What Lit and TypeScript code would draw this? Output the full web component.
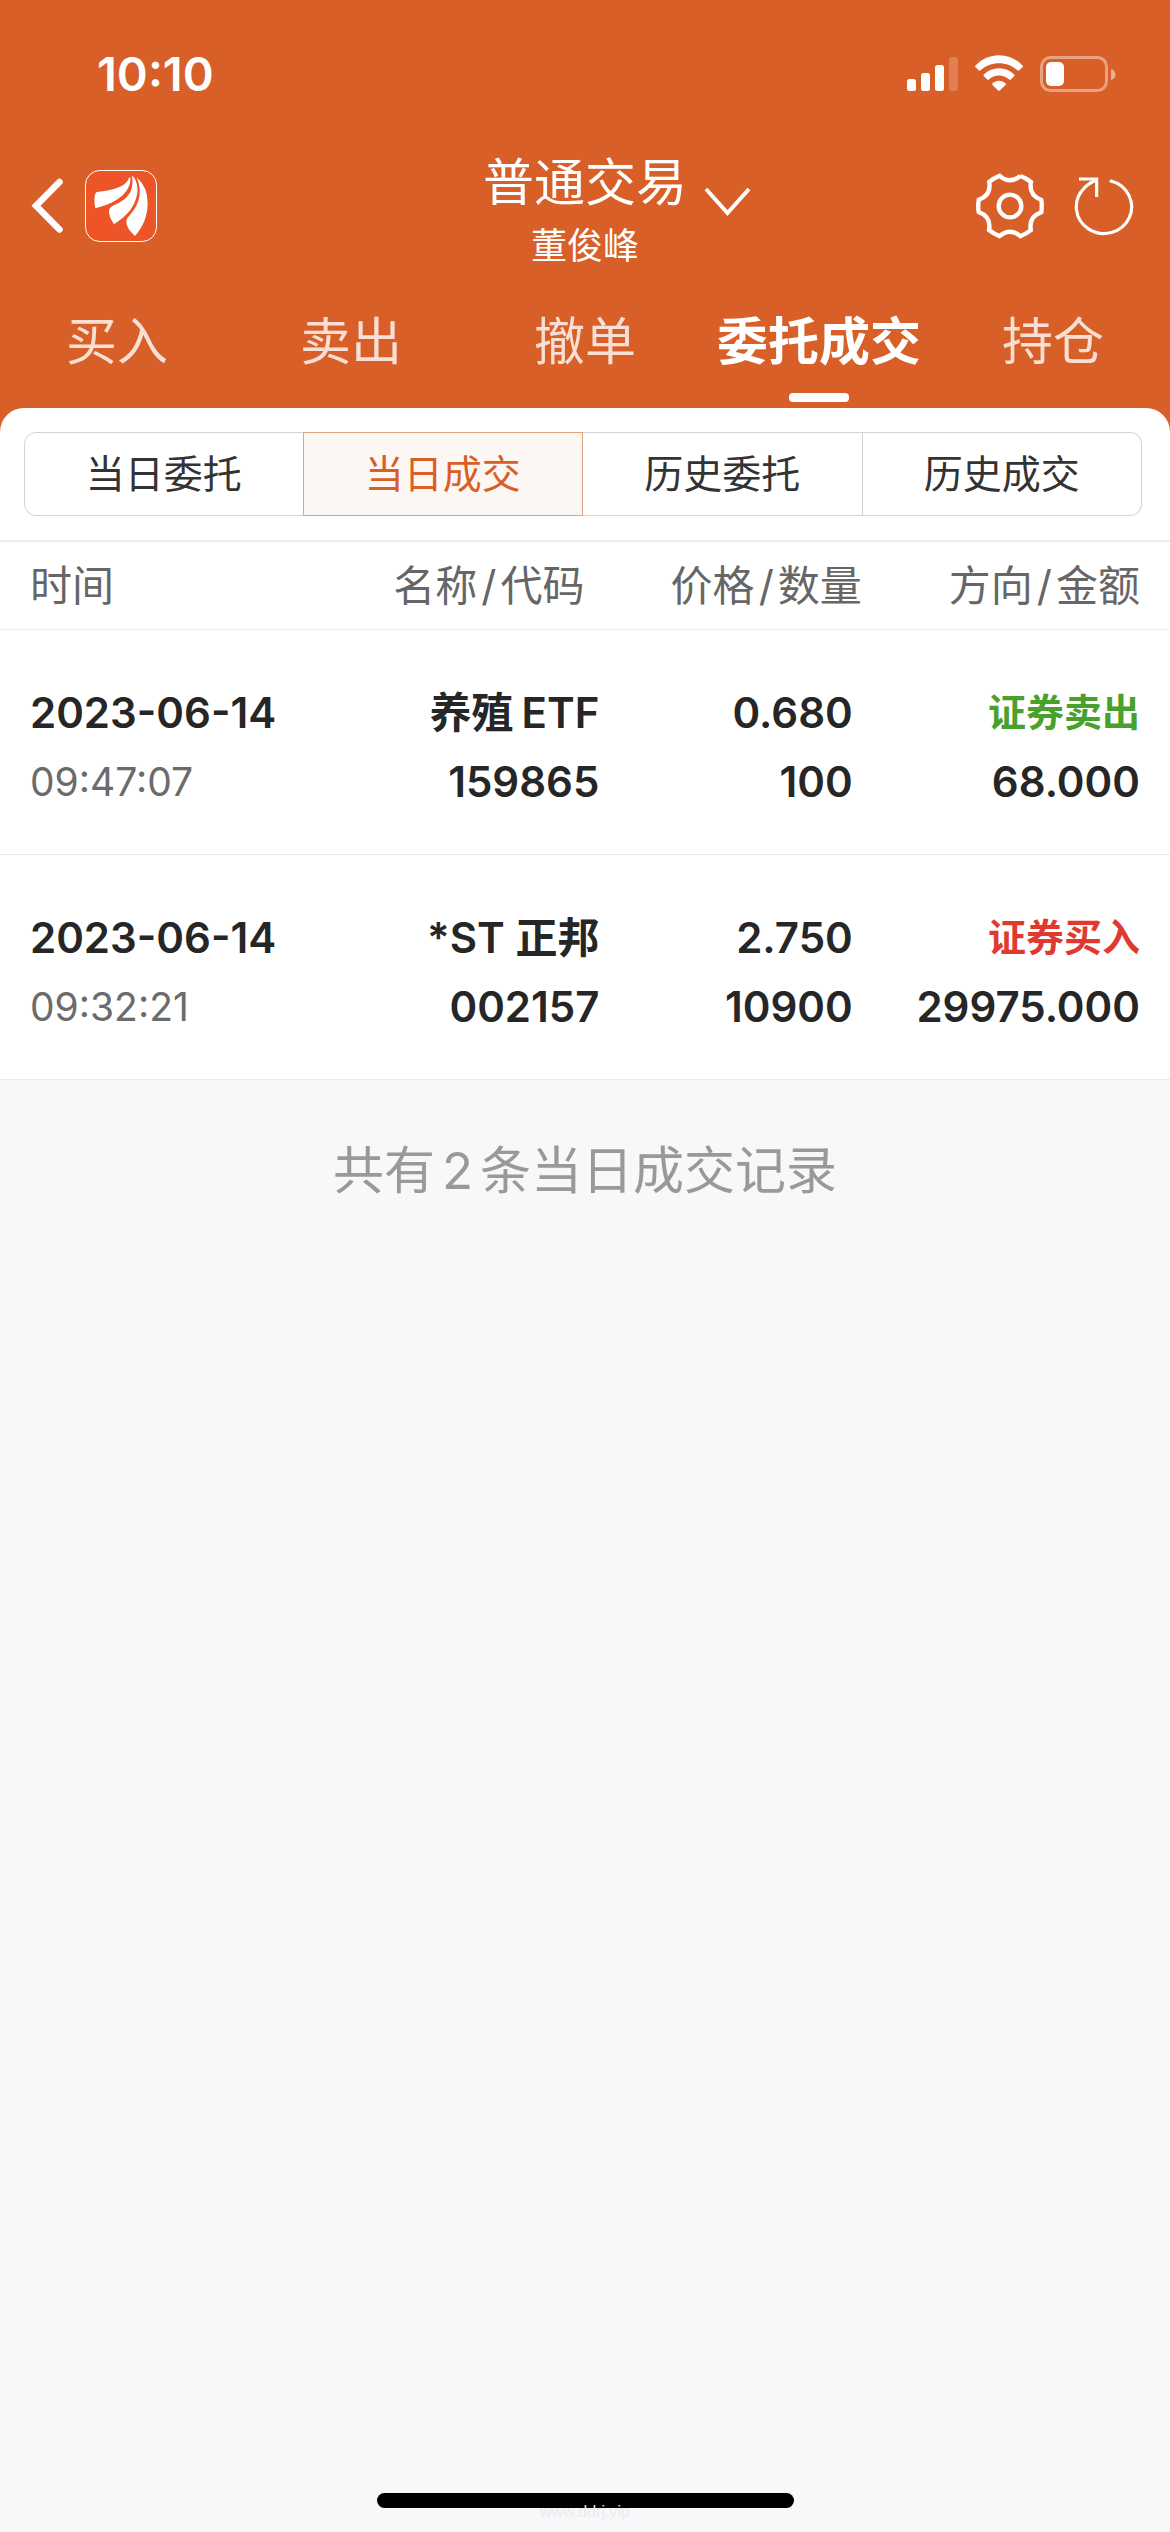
import { LitElement, html, css, svg } from "lit";
import { customElement, state } from "lit/decorators.js";
import { classMap } from "lit/directives/class-map.js";

interface Deal {
  date: string;
  time: string;
  name: unknown;
  code: string;
  price: string;
  quantity: string;
  side: "sell" | "buy";
  amount: string;
}

const DEALS: Deal[] = [
  { date: "2023-06-14", time: "09:47:07", name: html`养殖<span class="latin">ETF</span>`, code: "159865", price: "0.680", quantity: "100", side: "sell", amount: "68.000" },
  { date: "2023-06-14", time: "09:32:21", name: "*ST 正邦", code: "002157", price: "2.750", quantity: "10900", side: "buy", amount: "29975.000" },
];

const COLUMNS = [["时间"], ["名称", "代码"], ["价格", "数量"], ["方向", "金额"]];
const TABS = ["买入", "卖出", "撤单", "委托成交", "持仓"];
const SEGMENTS = ["当日委托", "当日成交", "历史委托", "历史成交"];
const SIDE_LABEL = { sell: "证券卖出", buy: "证券买入" };

/** Outline of a six-toothed cog: one tooth and one notch, turned six times. */
function cogPath(): string {
  const turn = (x: number, y: number, k: number) => {
    const a = (k * Math.PI) / 3;
    return `${(x * Math.cos(a) - y * Math.sin(a)).toFixed(1)} ${(x * Math.sin(a) + y * Math.cos(a)).toFixed(1)}`;
  };
  let d = `M${turn(31, -90, 0)}`;
  for (let k = 0; k < 6; k++) {
    d += `Q${turn(48, -84, k)} ${turn(63, -72, k)}C${turn(58, -46, k)} ${turn(69, -27, k)} ${turn(94, -18, k)}`;
  }
  return d + "Z";
}

@customElement("status-bar")
export class StatusBar extends LitElement {
  static styles = css`
    :host {
      display: flex;
      justify-content: space-between;
      align-items: center;
      height: 140px;
      padding: 8px 54px 0 97px;
      box-sizing: border-box;
      color: #fff;
    }
    .clock {
      font-size: 47px;
      line-height: 56px;
      font-weight: 600;
    }
    .signals {
      display: block;
    }
  `;

  render() {
    return html`
      <span class="clock">10:10</span>
      <svg class="signals" width="209" height="38" viewBox="907 55 209 38" fill="#fff" aria-hidden="true">
        ${svg`
          <rect x="907" y="79" width="9" height="12" rx="2.5" />
          <rect x="921" y="73" width="9" height="18" rx="2.5" />
          <rect x="935" y="65" width="9" height="26" rx="2.5" />
          <rect x="949" y="57" width="9" height="34" rx="2.5" opacity=".2" />
          <path d="M975.5 65.5C988.5 51.7 1009.5 51.7 1022.5 65.5Q1023.3 66.4 1022.5 67.2L1019 70.5Q1018.3 71 1017.5 70.3C1007.3 60.8 990.7 60.8 980.5 70.3Q979.7 71 979 70.5L975.5 67.2Q974.7 66.4 975.5 65.5Z" />
          <path d="M983.8 74.5C992 66 1006 66 1014.2 74.5Q1015 75.4 1014.2 76.2L1010.7 79.6Q1010 80.1 1009.2 79.5C1003.5 74.2 994.5 74.2 988.8 79.5Q988 80.1 987.3 79.6L983.8 76.2Q983 75.4 983.8 74.5Z" />
          <path d="M992.5 83.2C996.3 79.8 1001.7 79.8 1005.5 83.2Q1006.3 84 1005.5 84.9L999.8 90.5Q999 91.2 998.2 90.5L992.5 84.9Q991.7 84 992.5 83.2Z" />
          <rect x="1041.5" y="57.5" width="65" height="33" rx="9" fill="none" stroke="#fff" stroke-width="3" opacity=".42" />
          <rect x="1046" y="62" width="18" height="24" rx="5" />
          <path d="M1111 69Q1115.5 70.5 1115.5 74.5T1111 80Z" opacity=".5" />
        `}
      </svg>
    `;
  }
}

@customElement("nav-bar")
export class NavBar extends LitElement {
  static styles = css`
    :host {
      display: grid;
      grid-template-columns: 1fr auto 1fr;
      align-items: center;
      height: 132px;
      padding: 0 30px;
      box-sizing: border-box;
      color: #fff;
    }
    button {
      border: 0;
      padding: 0;
      background: none;
      color: inherit;
      font: inherit;
    }
    svg {
      display: block;
    }
    .left,
    .right {
      display: flex;
      align-items: center;
    }
    .left {
      gap: 21px;
    }
    .right {
      justify-content: flex-end;
      gap: 30px;
    }
    .account {
      display: grid;
      grid-template-columns: 48px auto 48px;
      column-gap: 16px;
      row-gap: 6px;
      align-items: center;
      padding-top: 6px;
      text-align: center;
    }
    .title {
      grid-column: 2;
      font-size: 51px;
      line-height: 66px;
    }
    .arrow {
      grid-column: 3;
      padding-top: 36px;
    }
    .owner {
      grid-column: 2;
      font-size: 36px;
      line-height: 46px;
    }
  `;

  render() {
    return html`
      <div class="left">
        <button aria-label="返回">
          <svg width="34" height="56" viewBox="30 179 34 56">
            <path d="M59.5 183L36 206.7L59.5 230.5" fill="none" stroke="#fff" stroke-width="6.5" stroke-linecap="round" />
          </svg>
        </button>
        <button aria-label="首页">
          <svg width="72" height="72" viewBox="0 0 216 216">
            <rect x="1.5" y="1.5" width="213" height="213" rx="43" fill="#ed5428" stroke="#fff" stroke-width="3" />
            <g fill="#fff">
              <path d="M32 69Q34 65 42 65C88 61 125 48 132 24L136 21C139 62 105 96 31 115Q25 86 32 69Z" />
              <path d="M141 18L146 21Q160 40 157 70C150 110 127 138 87 163Q70 137 72 122Q74 112 82 108C117 93 150 74 141 18Z" />
              <path d="M155 22Q188 52 188 98C188 138 174 170 150 198Q124 175 124 156C124 146 128 142 133 137C163 106 174 66 155 22Z" />
            </g>
          </svg>
        </button>
      </div>
      <button class="account">
        <span class="title">普通交易</span>
        <span class="arrow">
          <svg width="48" height="32" viewBox="0 0 48 32">
            <path d="M3 4L24.5 28L46 4" fill="none" stroke="#fff" stroke-width="4" />
          </svg>
        </span>
        <span class="owner">董俊峰</span>
      </button>
      <div class="right">
        <button aria-label="设置">
          <svg width="68" height="68" viewBox="-102 -102 204 204" fill="none" stroke="#fff" stroke-width="13">
            <path d=${cogPath()} />
            <circle r="34" />
          </svg>
        </button>
        <button aria-label="刷新">
          <svg width="66" height="60" viewBox="672 471 198 180" fill="none" stroke="#fff" stroke-width="9.5">
            <path d="M783 486A83 80 0 1 1 702 508Q712 496 738 483" />
            <circle cx="783" cy="486" r="4.7" fill="#fff" stroke="none" />
            <path d="M687 480H740V534" />
          </svg>
        </button>
      </div>
    `;
  }
}

@customElement("deal-table")
export class DealTable extends LitElement {
  static styles = css`
    :host {
      display: block;
      background: #fff;
    }
    table {
      width: 100%;
      table-layout: fixed;
      border-collapse: separate;
      border-spacing: 0;
    }
    .col-time {
      width: 28%;
    }
    .col-name {
      width: 24%;
    }
    .col-price {
      width: 22%;
    }
    th {
      padding: 14px 0 13px;
      font-size: 42px;
      line-height: 60px;
      font-weight: 400;
      color: #666;
      text-align: right;
      border-top: 2px solid #eee;
      border-bottom: 1px solid #eee;
      white-space: nowrap;
    }
    td {
      padding: 48px 0 38px;
      font-size: 42px;
      line-height: 69px;
      font-weight: 600;
      color: #262626;
      text-align: right;
      border-bottom: 1px solid #ebebeb;
      white-space: nowrap;
    }
    th:first-child,
    td:first-child {
      padding-left: 30px;
      text-align: left;
    }
    th:nth-child(2) {
      padding-right: 24px;
    }
    td:nth-child(2) {
      padding-right: 9px;
    }
    th:nth-child(3) {
      padding-right: 4px;
    }
    td:nth-child(3) {
      padding-right: 13px;
    }
    th:last-child,
    td:last-child {
      padding-right: 30px;
    }
    .slash {
      margin: 0 4px;
    }
    .latin {
      margin-left: 8px;
    }
    .line {
      display: block;
      height: 69px;
    }
    .time {
      font-size: 39px;
      font-weight: 400;
      color: #6b6b6b;
    }
    .sell,
    .buy {
      font-size: 38px;
    }
    .sell {
      color: #48a12c;
    }
    .buy {
      color: #e03a30;
    }
  `;

  render() {
    return html`
      <table>
        <colgroup>
          <col class="col-time" />
          <col class="col-name" />
          <col class="col-price" />
          <col />
        </colgroup>
        <thead>
          <tr>
            ${COLUMNS.map(
              ([first, second]) => html`<th scope="col">${first}${second ? html`<span class="slash">/</span>${second}` : ""}</th>`
            )}
          </tr>
        </thead>
        <tbody>
          ${DEALS.map(
            (d) => html`
              <tr>
                <td><span class="line">${d.date}</span><span class="line time">${d.time}</span></td>
                <td><span class="line">${d.name}</span><span class="line">${d.code}</span></td>
                <td><span class="line">${d.price}</span><span class="line">${d.quantity}</span></td>
                <td><span class="line ${d.side}">${SIDE_LABEL[d.side]}</span><span class="line">${d.amount}</span></td>
              </tr>
            `
          )}
        </tbody>
      </table>
    `;
  }
}

@customElement("app-root")
export class AppRoot extends LitElement {
  static styles = css`
    :host {
      display: flex;
      flex-direction: column;
      min-height: 100vh;
      background: #f7f8fa;
      font-family: Inter, "Noto Sans CJK SC", sans-serif;
    }
    button {
      border: 0;
      padding: 0;
      background: none;
      color: inherit;
      font: inherit;
    }
    .top {
      background: #d85f27;
    }
    .tabs {
      display: grid;
      grid-template-columns: repeat(5, 1fr);
      color: rgba(255, 255, 255, 0.8);
    }
    .tab {
      display: flex;
      flex-direction: column;
      align-items: center;
      gap: 21px;
      padding: 40px 0 6px;
      font-size: 51px;
      line-height: 60px;
      white-space: nowrap;
    }
    .tab::after {
      content: "";
      width: 60px;
      height: 9px;
      border-radius: 4px;
    }
    .tab.active {
      color: #fff;
      font-weight: 700;
    }
    .tab.active::after {
      background: #fff;
    }
    .filter {
      padding: 24px 28px 24px 24px;
      background: #fff;
      border-radius: 24px 24px 0 0;
    }
    .segments {
      display: grid;
      grid-template-columns: repeat(4, 1fr);
      height: 84px;
    }
    .segment {
      border: 1px solid #d2d3da;
      border-left-width: 0;
      font-size: 39px;
      line-height: 54px;
      color: #333;
    }
    .segment:first-child {
      border-left-width: 1px;
      border-radius: 12px 0 0 12px;
    }
    .segment:last-child {
      border-radius: 0 12px 12px 0;
    }
    .segment.active {
      margin-left: -1px;
      border: 1px solid #e0a483;
      background: #fdf7f3;
      color: #d85f27;
    }
    .summary {
      margin: 0;
      padding: 58px 0;
      font-size: 51px;
      line-height: 66px;
      text-align: center;
      color: #999;
    }
    .count {
      margin: 0 7px;
    }
    .home {
      position: relative;
      display: flex;
      justify-content: center;
      margin-top: auto;
      padding-bottom: 24px;
    }
    .handle {
      width: 417px;
      height: 15px;
      border-radius: 8px;
      background: #000;
    }
    .site {
      position: absolute;
      top: 10px;
      font-family: "Liberation Sans", sans-serif;
      font-size: 16px;
      line-height: 18px;
      color: #ebecee;
    }
  `;

  @state() private tab = 3;
  @state() private segment = 1;

  render() {
    return html`
      <header class="top">
        <status-bar></status-bar>
        <nav-bar></nav-bar>
        <nav class="tabs">
          ${TABS.map(
            (label, i) => html`
              <button class=${classMap({ tab: true, active: i === this.tab })} @click=${() => (this.tab = i)}>${label}</button>
            `
          )}
        </nav>
        <div class="filter">
          <div class="segments">
            ${SEGMENTS.map(
              (label, i) => html`
                <button class=${classMap({ segment: true, active: i === this.segment })} @click=${() => (this.segment = i)}>${label}</button>
              `
            )}
          </div>
        </div>
      </header>
      <deal-table></deal-table>
      <p class="summary">共有<span class="count">2</span>条当日成交记录</p>
      <footer class="home">
        <div class="handle"></div>
        <span class="site">www.ddrj.vip</span>
      </footer>
    `;
  }
}
